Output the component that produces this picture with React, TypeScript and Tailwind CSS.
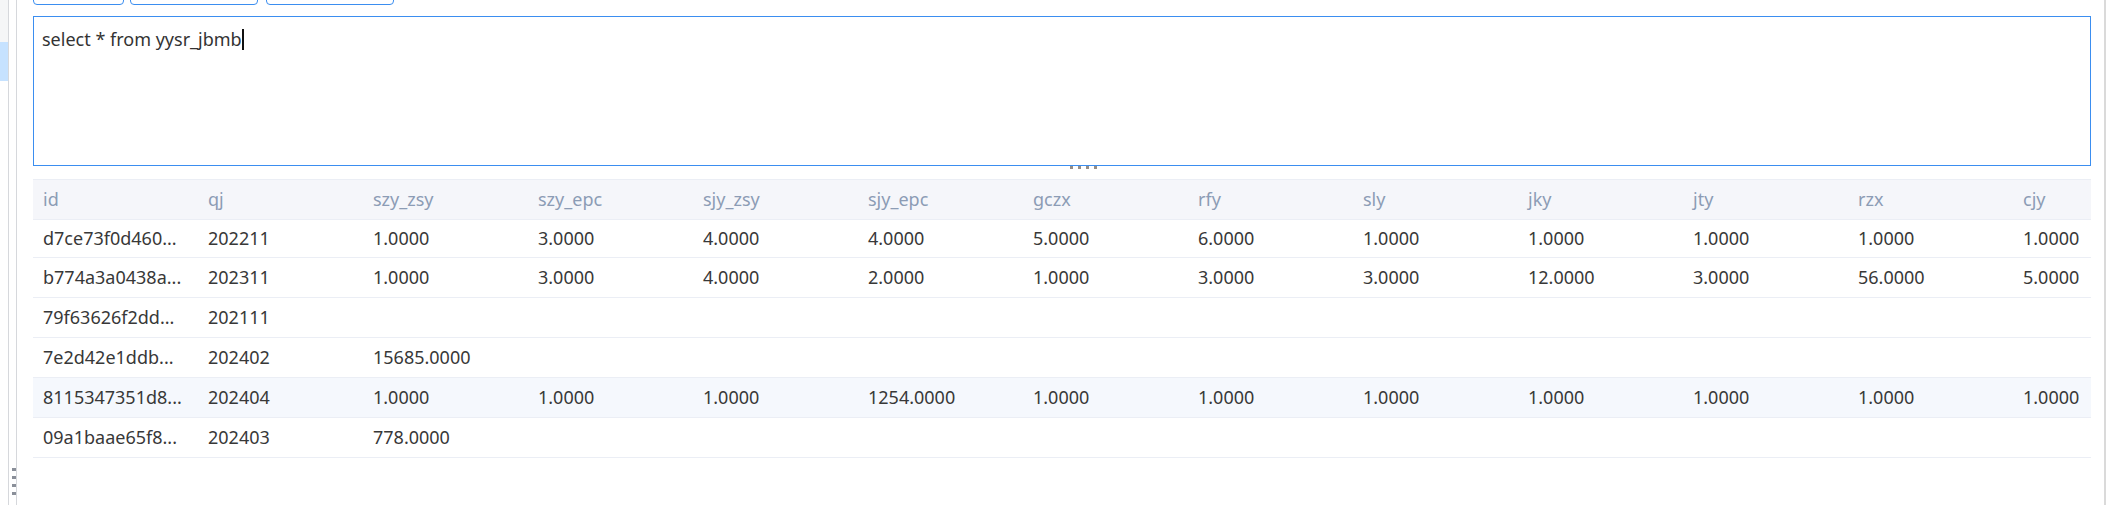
import * as React from 'react'

type Row = {
  cells: string[]
  active?: boolean
}

const columns = [
  'id',
  'qj',
  'szy_zsy',
  'szy_epc',
  'sjy_zsy',
  'sjy_epc',
  'gczx',
  'rfy',
  'sly',
  'jky',
  'jty',
  'rzx',
  'cjy',
]

const rows: Row[] = [
  {
    cells: ['d7ce73f0d460...', '202211', '1.0000', '3.0000', '4.0000', '4.0000', '5.0000', '6.0000', '1.0000', '1.0000', '1.0000', '1.0000', '1.0000'],
  },
  {
    cells: ['b774a3a0438a...', '202311', '1.0000', '3.0000', '4.0000', '2.0000', '1.0000', '3.0000', '3.0000', '12.0000', '3.0000', '56.0000', '5.0000'],
  },
  {cells: ['79f63626f2dd...', '202111']},
  {cells: ['7e2d42e1ddb...', '202402', '15685.0000']},
  {
    cells: ['8115347351d8...', '202404', '1.0000', '1.0000', '1.0000', '1254.0000', '1.0000', '1.0000', '1.0000', '1.0000', '1.0000', '1.0000', '1.0000'],
    active: true,
  },
  {cells: ['09a1baae65f8...', '202403', '778.0000']},
]

const Toolbar = () => (
  <div className="flex -mt-[31px] h-[36px] shrink-0">
    <button type="button" className="w-[91px] h-full rounded-[4px] border border-[#3b8ef0] bg-white" />
    <button type="button" className="ml-[6px] w-[128px] h-full rounded-[4px] border border-[#3b8ef0] bg-white" />
    <button type="button" className="ml-[8px] w-[128px] h-full rounded-[4px] border border-[#3b8ef0] bg-white" />
  </div>
)

const SqlEditor = () => (
  <div className="relative mt-[11px] shrink-0">
    <div className="h-[150px] w-full border border-[#3b8ef0] bg-white px-[8px] pt-[10px] text-[18px] leading-[24px] text-[#333]">
      select * from yysr_jbmb
      <span className="inline-block h-[21px] w-[2px] bg-[#111] align-[-4px]" />
    </div>
    {/* drag handle under the editor */}
    <div className="absolute left-[1037px] top-[150px] flex gap-[5px]">
      <span className="h-[3px] w-[3px] bg-[#958d86]" />
      <span className="h-[3px] w-[3px] bg-[#958d86]" />
      <span className="h-[3px] w-[3px] bg-[#958d86]" />
      <span className="h-[3px] w-[3px] bg-[#958d86]" />
    </div>
  </div>
)

const ResultTable = () => (
  <div className="mt-[13px] w-full overflow-hidden text-[18px]">
    <div className="flex h-[41px] items-center border-y border-[#ebeef5] bg-[#f5f6fa] text-[#8c9cb5]">
      {columns.map((col) => (
        <div key={col} className="w-[165px] shrink-0 pl-[10px] whitespace-nowrap">
          {col}
        </div>
      ))}
    </div>
    {rows.map((row, i) => (
      <div
        key={i}
        className={
          (i === 0 ? 'h-[38px] ' : 'h-[40px] ') +
          'flex items-center border-b border-[#ebeef5] text-[#383838] ' +
          (row.active ? 'bg-[#f5f8fd]' : 'bg-white')
        }
      >
        {columns.map((col, j) => (
          <div key={col} className="w-[165px] shrink-0 pl-[10px] whitespace-nowrap overflow-hidden">
            {row.cells[j] ?? ''}
          </div>
        ))}
      </div>
    ))}
  </div>
)

export default function App() {
  return (
    <div className="flex h-[505px] w-[2124px] overflow-hidden bg-white font-['Noto_Sans',sans-serif]">
      <aside className="w-[9px] shrink-0 border-r border-[#d6d8dc]">
        <div className="h-[42px] bg-[#f5f6f7]" />
        <div className="h-[39px] bg-[#c6e2ff]" />
      </aside>
      <div className="flex w-[8px] shrink-0 flex-col border-r border-[#d6d8dc] pt-[468px]">
        <div className="ml-[3px] flex flex-col gap-[5px]">
          <span className="h-[3px] w-[4px] bg-[#8a8f99]" />
          <span className="h-[3px] w-[4px] bg-[#8a8f99]" />
          <span className="h-[3px] w-[4px] bg-[#8a8f99]" />
          <span className="h-[3px] w-[4px] bg-[#8a8f99]" />
        </div>
      </div>
      <main className="flex min-w-0 flex-1 flex-col pl-[16px] pr-[13px]">
        <Toolbar />
        <SqlEditor />
        <ResultTable />
      </main>
      <div className="w-[20px] shrink-0 border-l-2 border-[#dadada]" />
    </div>
  )
}
